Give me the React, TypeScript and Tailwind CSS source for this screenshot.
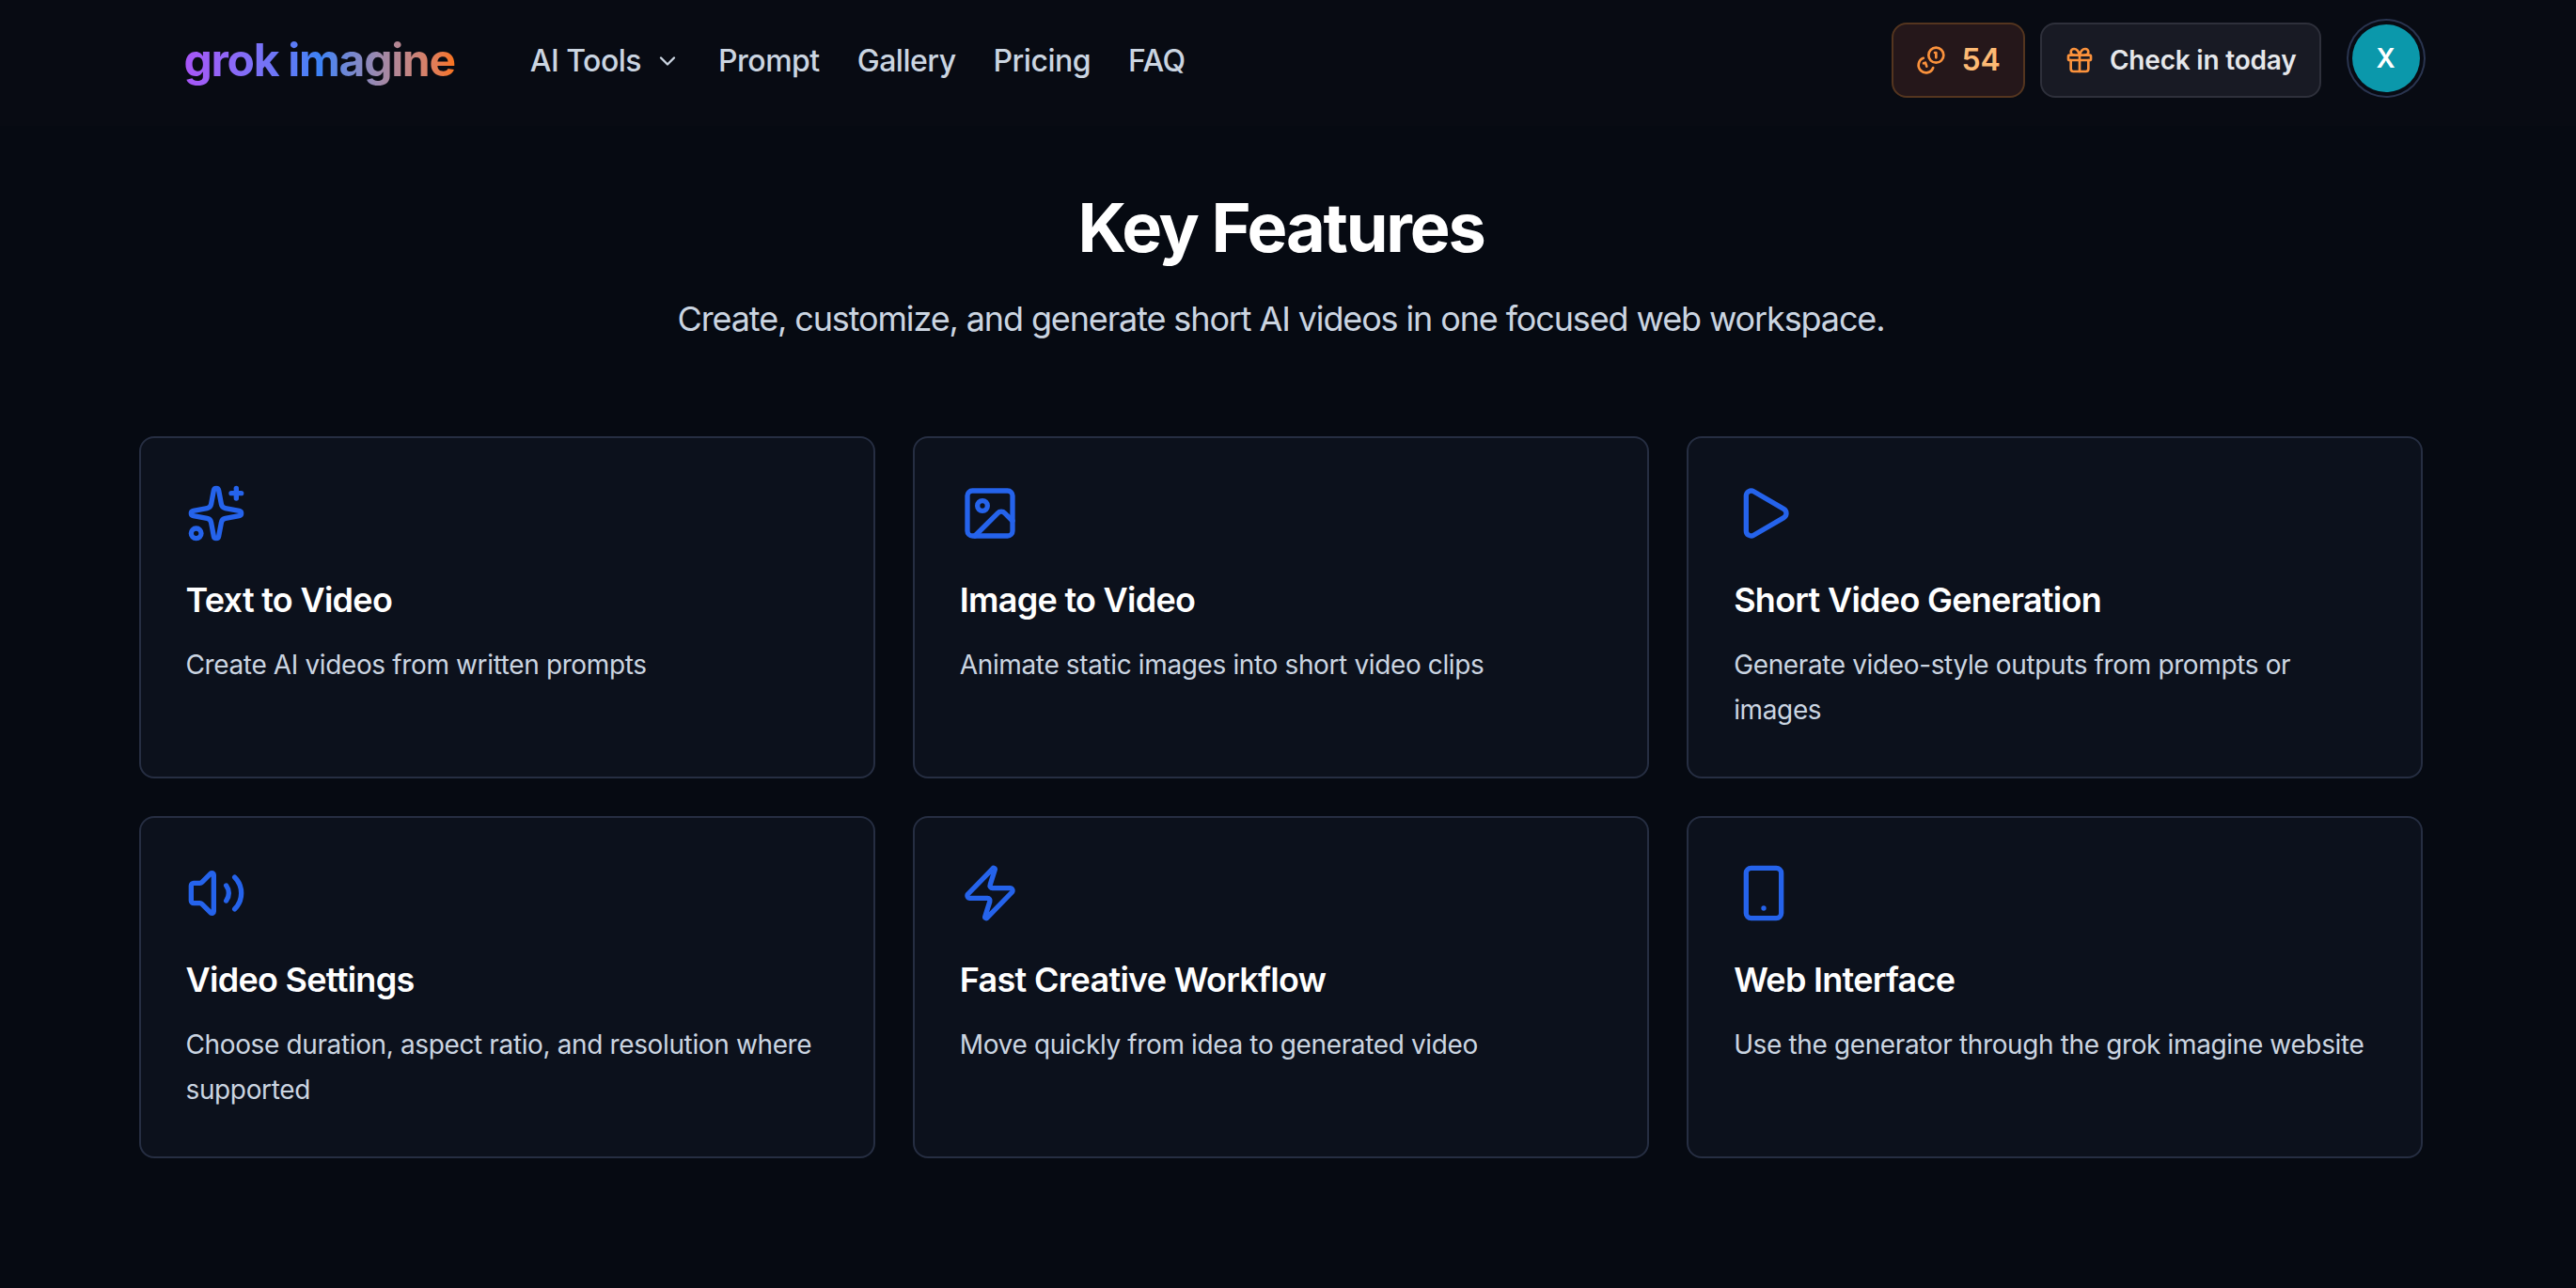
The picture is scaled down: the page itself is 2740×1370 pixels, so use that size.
import { ChevronDown, Gift, Image, Play, Smartphone, Sparkles, Volume2, Zap } from 'lucide-react'

const features = [
  { icon: Sparkles, title: 'Text to Video', text: 'Create AI videos from written prompts' },
  { icon: Image, title: 'Image to Video', text: 'Animate static images into short video clips' },
  { icon: Play, title: 'Short Video Generation', text: 'Generate video-style outputs from prompts or images' },
  { icon: Volume2, title: 'Video Settings', text: 'Choose duration, aspect ratio, and resolution where supported' },
  { icon: Zap, title: 'Fast Creative Workflow', text: 'Move quickly from idea to generated video' },
  { icon: Smartphone, title: 'Web Interface', text: 'Use the generator through the grok imagine website' },
]

const CoinsIcon = () => (
  <svg viewBox="0 0 24 24" fill="none" stroke="currentColor" strokeWidth="2" strokeLinecap="round" strokeLinejoin="round" className="h-8 w-8 text-[#fb923c]">
    <circle cx="16" cy="8" r="6" />
    <path d="M5.91 10.37A6 6 0 1 0 13.66 18" />
    <path d="M15 6h1v4" />
    <path d="m6 14.5 1.5-.5 1 3" />
  </svg>
)

export default function App() {
  return (
    <div className="min-h-screen bg-[#060a12] font-['Inter',sans-serif] text-white">
      <header className="h-[134px] bg-[#080b13] pr-[15px]">
        <div className="mx-auto flex h-[128px] w-[2430px] items-center justify-between pl-[48px]">
          <div className="flex items-center gap-[80px]">
            <span className="bg-gradient-to-r from-[#a855f7] via-[#3b82f6] to-[#f97316] bg-clip-text text-[48px] font-bold tracking-[-1.3px] text-transparent">
              grok imagine
            </span>
            <nav className="flex items-center gap-[40px] pt-[2px] text-[32px] font-medium tracking-[-0.5px] text-[#cbd5e1]">
              <span className="flex items-center gap-[14px]">
                AI Tools <ChevronDown className="h-[28px] w-[28px]" />
              </span>
              <span>Prompt</span>
              <span>Gallery</span>
              <span>Pricing</span>
              <span>FAQ</span>
            </nav>
          </div>
          <div className="flex items-center gap-[16px]">
            <div className="flex h-[80px] items-center gap-[16px] rounded-[16px] border-2 border-[#54351f] bg-[#25171a] px-[24px] text-[32px] font-semibold text-[#fdba74]">
              <CoinsIcon />
              54
            </div>
            <div className="flex h-[80px] items-center gap-[16px] rounded-[16px] border-2 border-[#2e303b] bg-[#181a24] px-[24px] text-[28px] font-semibold tracking-[-0.2px] text-[#e5e7eb]">
              <Gift className="h-8 w-8 text-[#fb923c]" />
              Check in today
            </div>
            <div className="mb-[5px] ml-[17px] mr-[4px] flex h-[72px] w-[72px] items-center justify-center rounded-full bg-[#0b98ab] text-[28px] font-semibold ring-2 ring-[#2a3550] ring-offset-4 ring-offset-[#080b13]">
              X
            </div>
          </div>
        </div>
      </header>
      <main className="pr-[15px]">
        <div className="mx-auto w-[2430px] pt-[68px]">
          <div className="text-center">
            <h2 className="text-[72px] font-bold leading-[80px] tracking-[-2.2px]">Key Features</h2>
            <p className="mt-[29px] text-[36px] leading-[56px] tracking-[-1.13px] text-[#cbd5e1]">
              Create, customize, and generate short AI videos in one focused web workspace.
            </p>
          </div>
          <div className="mt-[97px] grid grid-cols-3 gap-[40px]">
            {features.map((f) => (
              <div key={f.title} className="h-[364px] rounded-[16px] border-2 border-[#262e42] bg-[#0c111c] p-[48px]">
                <f.icon className="h-16 w-16 text-[#2563eb]" />
                <h3 className="mt-[32px] text-[36px] font-semibold leading-[56px] tracking-[-0.72px]">{f.title}</h3>
                <p className="mt-[17px] text-[28px] leading-[48px] tracking-[-0.37px] text-[#cbd5e1]">{f.text}</p>
              </div>
            ))}
          </div>
        </div>
      </main>
    </div>
  )
}
